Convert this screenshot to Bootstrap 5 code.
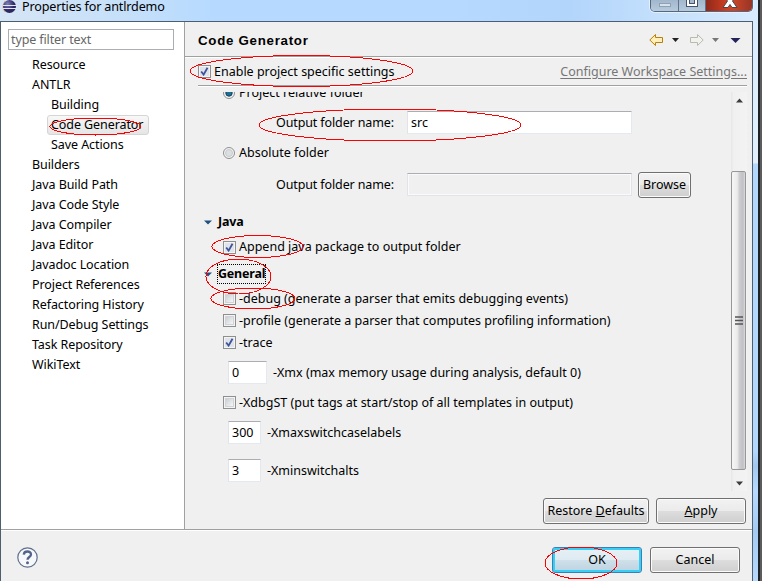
<!DOCTYPE html>
<html lang="en">
<head>
<meta charset="utf-8">
<title>Properties for antlrdemo</title>
<link href="https://cdn.jsdelivr.net/npm/bootstrap@5.3.0/dist/css/bootstrap.min.css" rel="stylesheet">
<style>
body{width:762px;height:581px;overflow:hidden;font:12.5px/18px "Noto Sans","Open Sans",sans-serif;color:#000;background:#5c5c5c;white-space:nowrap}
.win{width:760px;height:581px;border-right:2px solid #1d2229;background:linear-gradient(90deg,#c9dff7,#b7dbff 25%,#b7d9fd 60%,#c5e0fb 80%,#d8ebfd)}
.titlebar{height:21px;padding-left:2px;background:linear-gradient(90deg,#d6e5f5,#c4dffa 18%,#b6daff 28%,#b6daff 60%,#b2d5fb 75%,#cfe6fd 95%,#d9ecfd)}
.caption-text{font-size:12.6px;line-height:14px;margin-left:4px;letter-spacing:-.17px}
.winbtns{width:103px;height:12px;border:1px solid #55677c;border-top:0;border-radius:0 0 5px 5px;overflow:hidden;margin-right:5px;box-shadow:0 0 0 1px #e4f1fd}
.wb{flex:none;background:linear-gradient(#a3b7cc,#b8cce0);border-right:1px solid #607389}
.wb-close{flex:none;background:linear-gradient(90deg,#8e2a1c,#cf3d21 45%,#c94527 60%,#973526)}
.client{width:753px;height:560px;border:1px solid #4e5e72;border-bottom:0;background:#f0f0f0}
.edge{width:5px;background:linear-gradient(#d9ecfd 0,#e3f1fe 142px,#b3d7fd 143px,#b3d7fd 430px,#a3c8f0 445px,#b7d9fd 470px,#a5caf2 510px,#b7d9fd)}
.upper{height:507px}
.tree{width:184px;background:#fff;border-right:1px solid #a0a0a0;padding:7px 0 0 7px}
.filter{width:166px;height:21px;border:1px solid #abadb3;color:#666;padding-left:2px;line-height:20px;margin-bottom:5px;letter-spacing:-.12px}
.node{height:20px;line-height:20px;padding-left:24px;letter-spacing:-.08px}
.sub{padding-left:43px}
.picked span{display:inline-block;height:20px;border:1px solid #d5d5d5;border-radius:3px;background:linear-gradient(#f8f8f8,#e5e5e5);margin-left:-4px;padding:0 3px;line-height:18px;width:102px}
.pane-head{height:35px;border-bottom:1px solid #a0a0a0;box-shadow:0 1px #fff;padding:2px 11px 0 13px}
.pane-title{font:bold 13.3px/20px "Liberation Sans",Arial,sans-serif;letter-spacing:.72px;padding-top:1px}
.enable{height:29px;margin:0 5px 0 13px;padding-top:1px;border-bottom:1px solid #a0a0a0;box-shadow:0 1px #fff}
.cfg{color:#767676;text-decoration:underline;text-underline-offset:2px}
.scroller{height:399px;margin:6px 5px 0 13px;overflow:hidden}
.form-area{margin-top:-8px;width:533px}
.r18{height:18px}.r22{height:22px}.r26{height:26px}.r28{height:28px}.r32{height:32px}.r34{height:34px}.r42{height:42px}.r46{height:46px}
.in1{padding-left:25px}.in2{padding-left:78px}.in3{padding-left:30px}.in0{padding-left:6px}
.tick{width:13px;height:13px;border:1px solid #8e8f8f;background:#f4f4f4;padding:1px;margin-right:3px;flex:none}
.r18 .tick,.r26 .tick{margin-bottom:1px}
.tick i{display:block;width:9px;height:9px;border:1px solid #d0d3d8;background:linear-gradient(135deg,#cbcfd5,#f6f6f6)}
.tick svg,.dot svg{display:block}
.dot{margin-right:4px;flex:none}
.fld{height:23px;border:1px solid #e3e9ef;border-top-color:#abadb3;border-left-color:#e2e3ea;background:#fff;padding-left:3px;line-height:21px;flex:none;margin-bottom:1px}
.fld-off{background:#f0f0f0;border-color:#abadb3 #e2e3ea #e2e3ea;box-shadow:inset 0 0 0 1px #fafafa}
.w224{width:225px}.w39{width:39px}.w33{width:33px}
.after-fld{margin-left:6px}
.lbl{width:131px;flex:none;letter-spacing:-.12px}
.push{height:26px;border:1px solid #707070;border-radius:3px;padding:0;font-size:12.5px;line-height:22px;color:#000;background:linear-gradient(#f2f2f2 0,#ebebeb 48%,#dddddd 50%,#cfcfcf);box-shadow:inset 0 0 0 1px #fbfbfb;flex:none}
.w90{width:90px}.w106{width:106px}.w53{width:53px}
.browse{margin-right:40px}
.push-ok{border-color:#3c7fb1;background:linear-gradient(#e6f0f5 0,#dfebf2 48%,#cfe0ea 50%,#bcd3e0);box-shadow:inset 0 0 0 2px #35d0f8}
.sect{font-weight:700;margin-left:6px;letter-spacing:-.2px}
.focus-dots{outline:1px dotted #000}
.sbar{width:16px;background:linear-gradient(90deg,#e5e5e5,#f0f0f0 15%,#f3f3f3)}
.sbar-top{height:79px;padding-top:6px}
.thumb{height:299px;width:15px;border:1px solid #979797;border-radius:2px;background:linear-gradient(90deg,#f6f6f6,#ebebeb 40%,#cfcfd2 55%,#c0c0c5 85%,#dcdcdc)}
.sbar-bot{height:21px;padding-top:6px}
.actions{padding:7px 6px 0 0;gap:7px}
.foot{height:52px;border-top:1px solid #a0a0a0;box-shadow:inset 0 1px #fff;padding:17px 12px 0 16px}
.marks{left:0;top:0;pointer-events:none}
</style>
<script src="https://cdn.jsdelivr.net/npm/bootstrap@5.3.0/dist/js/bootstrap.bundle.min.js"></script>
</head>
<body class="position-relative">
<div class="win">
  <div class="titlebar d-flex justify-content-between">
    <div class="d-flex">
      <svg width="16" height="14" viewBox="0 0 16 14"><defs><radialGradient id="orb" cx=".35" cy=".3"><stop offset="0" stop-color="#7f83b8"/><stop offset="1" stop-color="#2c2863"/></radialGradient></defs><path d="M3 1Q-1 7 3 12" fill="none" stroke="#e8a87c"/><circle cx="7.5" cy="6.5" r="6.5" fill="url(#orb)"/><path d="M1 5.5h14M1 8.5h14" stroke="#e4e6f5" stroke-width="1.2"/></svg>
      <span class="caption-text">Properties for antlrdemo</span>
    </div>
    <div class="winbtns d-flex">
      <svg class="wb" width="28" height="12"><rect x="8.500" y="3.500" width="11" height="3" fill="#d6e1ec" stroke="#8fa1b5"/></svg>
      <svg class="wb" width="27" height="12"><rect x="7.500" y="-4.500" width="11" height="11" fill="#fff" stroke="#46536a"/><rect x="10.500" y="-.5" width="5" height="4" fill="#a7bacd" stroke="#46536a"/></svg>
      <svg class="wb-close" width="46" height="12"><path d="M17 7.500 21.500 1 17-5h5l2 3 2-3h5l-4.500 6L31 7.500h-5l-2-3-2 3z" fill="#fff" stroke="#4a4650"/></svg>
    </div>
  </div>
  <div class="d-flex">
    <div class="client">
      <div class="upper d-flex">
        <div class="tree flex-shrink-0">
          <div class="filter"><span>type filter text</span></div>
          <div class="node"><span>Resource</span></div>
          <div class="node"><span>ANTLR</span></div>
          <div class="node sub"><span>Building</span></div>
          <div class="node sub picked"><span>Code Generator</span></div>
          <div class="node sub"><span>Save Actions</span></div>
          <div class="node"><span>Builders</span></div>
          <div class="node"><span>Java Build Path</span></div>
          <div class="node"><span>Java Code Style</span></div>
          <div class="node"><span>Java Compiler</span></div>
          <div class="node"><span>Java Editor</span></div>
          <div class="node"><span>Javadoc Location</span></div>
          <div class="node"><span>Project References</span></div>
          <div class="node"><span>Refactoring History</span></div>
          <div class="node"><span>Run/Debug Settings</span></div>
          <div class="node"><span>Task Repository</span></div>
          <div class="node"><span>WikiText</span></div>
        </div>
        <div class="flex-fill">
          <div class="pane-head d-flex align-items-center justify-content-between">
            <span class="pane-title">Code Generator</span>
            <svg width="92" height="14" viewBox="0 0 92 14"><path d="M.8 7 6.500 1.500v3h7v5h-7v3z" fill="#fff0b8" stroke="#b8800e" stroke-linejoin="round"/><path d="M23 5h7l-3.500 4z" fill="#222"/><path d="M54.200 7 48.500 1.500v3h-7v5h7v3z" fill="#f2f2ec" stroke="#b9b9b2" stroke-linejoin="round"/><path d="M63 5h7l-3.500 4z" fill="#777"/><path d="M81.500 5h10l-5 5z" fill="#26235c"/></svg>
          </div>
          <div class="enable d-flex align-items-center justify-content-between">
            <div class="d-flex align-items-center"><div class="tick"><svg width="9" height="9" viewBox="0 0 9 9"><rect width="9" height="9" fill="#dfe3ea"/><path d="M1.200 4.500 3.600 7.600 7.500.8" fill="none" stroke="#3f539b" stroke-width="1.800"/></svg></div><span>Enable pro<u>j</u>ect specific settings</span></div>
            <span class="cfg">Configure Workspace Settings...</span>
          </div>
          <div class="scroller d-flex">
            <div class="form-area">
              <div class="r18 in1 d-flex align-items-center"><svg class="dot" width="12" height="12"><circle cx="6" cy="6" r="5.500" fill="#f4f4f4" stroke="#8e8f8f"/><circle cx="6" cy="6" r="3.200" fill="#1d6f95" stroke="#173f5c"/></svg><span>Project relative folder</span></div>
              <div class="r42 in2 d-flex align-items-center"><span class="lbl">Output folder name:</span><div class="fld w224"><span>src</span></div></div>
              <div class="r18 in1 d-flex align-items-center"><svg class="dot" width="12" height="12"><circle cx="6" cy="6" r="5.500" fill="#f4f4f4" stroke="#8e8f8f"/><circle cx="6" cy="6" r="3.500" fill="#dcdfe2" stroke="#c7cacd"/></svg><span>Absolute folder</span></div>
              <div class="r46 in2 d-flex align-items-center"><span class="lbl">Output folder name:</span><div class="fld fld-off w224"></div><button class="btn push w53 ms-auto browse" type="button">Browse</button></div>
              <div class="r28 in0 d-flex align-items-center"><svg width="8" height="5"><path d="M0 .5h8L4 4.500z" fill="#1c5180"/></svg><span class="sect">Java</span></div>
              <div class="r22 in1 d-flex align-items-center"><div class="tick"><svg width="9" height="9" viewBox="0 0 9 9"><rect width="9" height="9" fill="#dfe3ea"/><path d="M1.200 4.500 3.600 7.600 7.500.8" fill="none" stroke="#3f539b" stroke-width="1.800"/></svg></div><span>Append java package to output folder</span></div>
              <div class="r32 in0 d-flex align-items-center"><svg width="8" height="5"><path d="M0 .5h8L4 4.500z" fill="#1c5180"/></svg><span class="sect focus-dots">General</span></div>
              <div class="r18 in1 d-flex align-items-center"><div class="tick"><i></i></div><span>-debug (generate a parser that emits debugging events)</span></div>
              <div class="r26 in1 d-flex align-items-center"><div class="tick"><i></i></div><span>-profile (generate a parser that computes profiling information)</span></div>
              <div class="r18 in1 d-flex align-items-center"><div class="tick"><svg width="9" height="9" viewBox="0 0 9 9"><rect width="9" height="9" fill="#dfe3ea"/><path d="M1.200 4.500 3.600 7.600 7.500.8" fill="none" stroke="#3f539b" stroke-width="1.800"/></svg></div><span>-trace</span></div>
              <div class="r42 in3 d-flex align-items-center"><div class="fld w39">0</div><span class="after-fld">-Xmx (max memory usage during analysis, default 0)</span></div>
              <div class="r18 in1 d-flex align-items-center"><div class="tick"><i></i></div><span>-XdbgST (put tags at start/stop of all templates in output)</span></div>
              <div class="r42 in3 d-flex align-items-center"><div class="fld w33">300</div><span class="after-fld">-Xmaxswitchcaselabels</span></div>
              <div class="r34 in3 d-flex align-items-center"><div class="fld w33">3</div><span class="after-fld">-Xminswitchalts</span></div>
            </div>
            <div class="sbar">
              <div class="sbar-top"><svg class="d-block mx-auto" width="7" height="5"><path d="M0 4.500h7L3.500.5z" fill="#3c3c3c"/></svg></div>
              <div class="thumb d-flex align-items-center justify-content-center"><svg width="8" height="9"><path d="M0 1h8M0 4.500h8M0 8h8" stroke="#555" stroke-width="1.500"/></svg></div>
              <div class="sbar-bot d-flex align-items-center justify-content-center"><svg width="7" height="5"><path d="M0 .5h7L3.500 4.500z" fill="#3c3c3c"/></svg></div>
            </div>
          </div>
          <div class="actions d-flex justify-content-end">
            <button class="btn push w106" type="button">Restore <u>D</u>efaults</button>
            <button class="btn push w90" type="button"><u>A</u>pply</button>
          </div>
        </div>
      </div>
      <div class="foot d-flex align-items-start">
        <svg width="21" height="21" viewBox="0 0 21 21"><circle cx="10.500" cy="10.500" r="9.700" fill="#f6f8fa" stroke="#5f6f8c" stroke-width="1.200"/><path d="M6.800 7.600C7 3.500 14 3.500 14 7.400c0 2.600-3.500 2.600-3.500 5.400" fill="none" stroke="#53658a" stroke-width="2.300"/><circle cx="10.500" cy="15.800" r="1.500" fill="#53658a"/></svg>
        <div class="ms-auto d-flex gap-2"><button class="btn push push-ok w90" type="button">OK</button><button class="btn push w90" type="button">Cancel</button></div>
      </div>
    </div>
    <div class="edge"></div>
  </div>
</div>
<svg class="marks position-absolute" width="762" height="581" fill="none" stroke="#f00" shape-rendering="crispEdges">
  <ellipse cx="301.500" cy="71" rx="111.500" ry="15.500"/>
  <ellipse cx="95.500" cy="126.500" rx="45.500" ry="8.500"/>
  <ellipse cx="390" cy="125" rx="131" ry="16"/>
  <ellipse cx="257.500" cy="246.500" rx="45.500" ry="11"/>
  <ellipse cx="238.500" cy="276.500" rx="32.500" ry="17.500"/>
  <ellipse cx="253" cy="298.500" rx="42" ry="10.500"/>
  <ellipse cx="581" cy="563" rx="36" ry="16"/>
</svg>
</body>
</html>
